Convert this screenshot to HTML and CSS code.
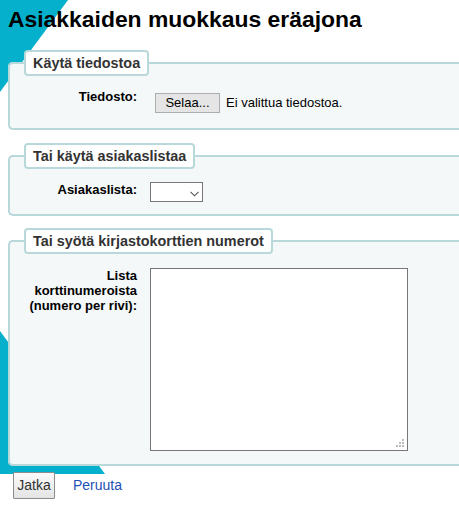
FILE: index.html
```html
<!DOCTYPE html>
<html lang="fi">
<head>
<meta charset="utf-8">
<title>Asiakkaiden muokkaus eräajona</title>
<link rel="stylesheet" href="styles.css">
</head>
<body>
<svg class="bg" width="459" height="512" viewBox="0 0 459 512" aria-hidden="true">
  <polygon points="0,0 68,0 0,92" fill="#04b0cc"/>
  <polygon points="0,331 105,474 0,474" fill="#04b0cc"/>
</svg>
<div class="page">
  <h1 class="title">Asiakkaiden muokkaus eräajona</h1>
  <form class="batch">
    <fieldset class="rows first">
      <legend class="legend">Käytä tiedostoa</legend>
      <div class="row">
        <label class="lbl">Tiedosto:</label>
        <div class="file">
          <button type="button" class="file-btn">Selaa...</button>
          <span class="file-text">Ei valittua tiedostoa.</span>
        </div>
      </div>
    </fieldset>
    <fieldset class="rows second">
      <legend class="legend">Tai käytä asiakaslistaa</legend>
      <div class="row">
        <label class="lbl">Asiakaslista:</label>
        <span class="select-wrap">
          <select class="select"><option></option></select>
          <svg class="chev" width="9" height="6" viewBox="0 0 9 6"><path d="M0.5 0.8 L4.5 4.8 L8.5 0.8" fill="none" stroke="#555" stroke-width="1.1"/></svg>
        </span>
      </div>
    </fieldset>
    <fieldset class="rows third">
      <legend class="legend">Tai syötä kirjastokorttien numerot</legend>
      <div class="row">
        <label class="lbl">Lista korttinumeroista (numero per rivi):</label>
        <span class="ta-wrap">
          <textarea class="ta"></textarea>
          <svg class="grip" width="9" height="9" viewBox="0 0 9 9"><g fill="#bdbdbd"><rect x="6" y="0" width="2" height="2"/><rect x="3" y="3" width="2" height="2"/><rect x="6" y="3" width="2" height="2"/><rect x="0" y="6" width="2" height="2"/><rect x="3" y="6" width="2" height="2"/><rect x="6" y="6" width="2" height="2"/></g></svg>
        </span>
      </div>
    </fieldset>
    <div class="actions">
      <button type="button" class="submit">Jatka</button>
      <a class="cancel" href="#">Peruuta</a>
    </div>
  </form>
</div>
</body>
</html>
```
FILE: styles.css
```css
html {
  overflow: hidden;
}
body {
  margin: 0;
  padding: 8px;
  font-family: "Liberation Sans", Arial, sans-serif;
  font-size: 13px;
  color: #000;
  background: #fff;
  position: relative;
  min-height: 496px;
}
.bg {
  position: absolute;
  left: 0;
  top: 0;
  z-index: 0;
}
.page {
  position: relative;
  z-index: 1;
}
.title {
  margin: 0 0 19px 0;
  font-size: 22.9px;
  line-height: 22.75px;
  font-weight: bold;
  color: #000;
}
.rows {
  margin: 0 -8px 13px 0;
  border: 2px solid #b9d8d9;
  border-right: 0;
  border-radius: 5px 0 0 5px;
  background: #f4f8f9;
  padding: 13px 10px 15px 10px;
  min-width: 0;
}
.second {
  padding-bottom: 12px;
  margin-bottom: 12px;
}
.third {
  padding-top: 14px;
  padding-bottom: 13px;
  margin-bottom: 6px;
}
.legend {
  margin-left: 4px;
  padding: 3px 7px;
  border: 2px solid #b9d8d9;
  border-radius: 4px;
  background: #fff;
  font-weight: bold;
  font-size: 14.4px;
  line-height: 16px;
  color: #333;
}
.row {
  display: flex;
  align-items: flex-start;
}
.lbl {
  width: 117px;
  margin-right: 13px;
  text-align: right;
  font-weight: bold;
  line-height: 15px;
  color: #000;
}
.file {
  margin-top: 4px;
  margin-left: 5px;
  display: flex;
  align-items: center;
}
.file-btn {
  height: 20px;
  width: 65px;
  padding: 0;
  margin: 0 6px 0 0;
  border: 1px solid #adadad;
  background: #e5e5e5;
  font-family: "Liberation Sans", Arial, sans-serif;
  font-size: 13px;
  color: #000;
}
.file-text {
  font-size: 13px;
  line-height: 15px;
  color: #000;
}
.select-wrap {
  position: relative;
  display: inline-block;
  height: 20px;
}
.select {
  appearance: none;
  -webkit-appearance: none;
  display: block;
  width: 53px;
  height: 20px;
  margin: 0;
  border: 1px solid #767676;
  border-radius: 0;
  background: #fff;
  font-family: "Liberation Sans", Arial, sans-serif;
  font-size: 13px;
}
.chev {
  position: absolute;
  left: 40px;
  top: 9px;
}
.ta-wrap {
  position: relative;
  display: inline-block;
  height: 183px;
}
.ta {
  display: block;
  box-sizing: border-box;
  width: 258px;
  height: 183px;
  margin: 0;
  border: 1px solid #767676;
  background: #fff;
  resize: none;
}
.grip {
  position: absolute;
  right: 3px;
  bottom: 3px;
}
.actions {
  display: flex;
  align-items: center;
  padding-left: 5px;
}
.submit {
  height: 27px;
  width: 42px;
  padding: 0;
  margin: 0 18px 0 0;
  border: 1px solid #8c8c8c;
  border-radius: 1px;
  background: linear-gradient(#fbfbfb, #e4e4e4);
  font-family: "Liberation Sans", Arial, sans-serif;
  font-size: 14px;
  color: #333;
}
.cancel {
  font-size: 14px;
  color: #1e4fb6;
  text-decoration: none;
}
```
